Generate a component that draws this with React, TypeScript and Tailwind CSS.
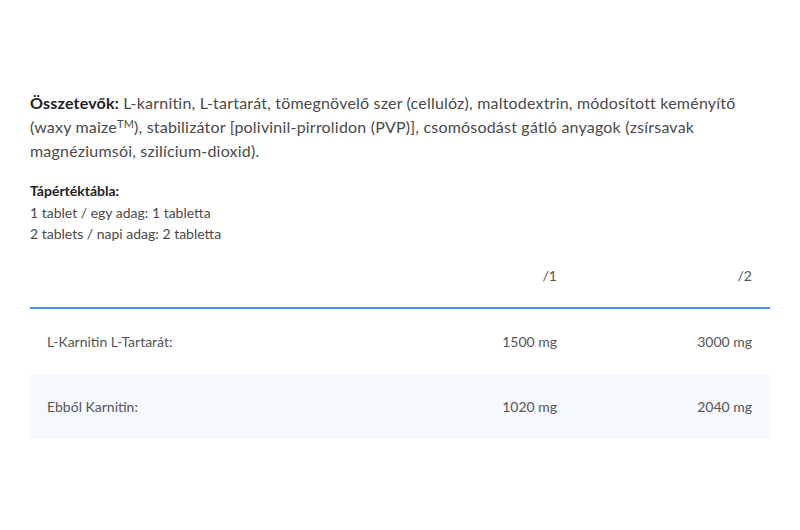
export default function App() {
  const rows = [
    { name: "L-Karnitin L-Tartarát:", one: "1500 mg", two: "3000 mg" },
    { name: "Ebből Karnitin:", one: "1020 mg", two: "2040 mg" },
  ];

  return (
    <div className="w-[800px] h-[530px] bg-white px-[30px] pt-[91px] font-['Lato','Liberation_Sans',sans-serif] text-[#4a4a4a]">
      <p className="text-[16px] leading-[24px] tracking-[0.2px]">
        <span className="font-bold text-[#222]">Összetevők:</span> L-karnitin, L-tartarát, tömegnövelő szer (cellulóz), maltodextrin, módosított keményítő
        <br />
        (waxy maize<sup className="text-[11px] leading-none">TM</sup>), stabilizátor [polivinil-pirrolidon (PVP)], csomósodást gátló anyagok (zsírsavak
        <br />
        magnéziumsói, szilícium-dioxid).
      </p>

      <div className="mt-[17px] text-[14px] leading-[21.5px]">
        <p className="font-bold text-[#222]">Tápértéktábla:</p>
        <p>1 tablet / egy adag: 1 tabletta</p>
        <p>2 tablets / napi adag: 2 tabletta</p>
      </div>

      <div className="text-[14px] text-[#555]">
        <div className="grid grid-cols-[1fr_195px_195px] h-[64px] items-center border-b-2 border-[#4a8fdc]">
          <div />
          <div className="text-right pr-[18px]">/1</div>
          <div className="text-right pr-[18px]">/2</div>
        </div>
        {rows.map((r, i) => (
          <div
            key={r.name}
            className={`grid grid-cols-[1fr_195px_195px] h-[65px] items-center ${i % 2 === 1 ? "bg-[#f5f8fd]" : ""}`}
          >
            <div className="pl-[17px]">{r.name}</div>
            <div className="text-right pr-[18px]">{r.one}</div>
            <div className="text-right pr-[18px]">{r.two}</div>
          </div>
        ))}
      </div>
    </div>
  );
}
